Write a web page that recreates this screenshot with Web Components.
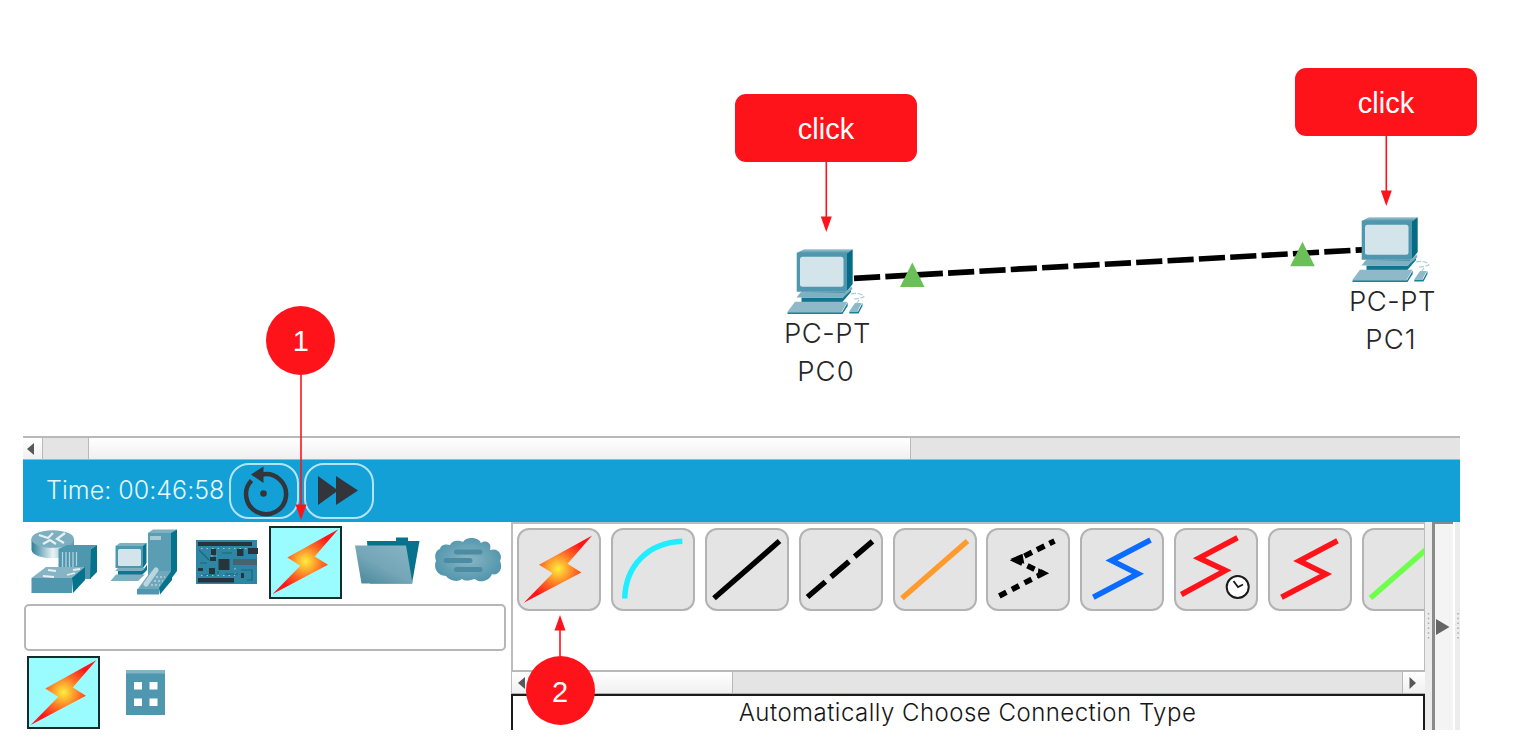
<!DOCTYPE html>
<html lang="en">
<head>
<meta charset="utf-8">
<title>Connection guide</title>
<style>
html,body{margin:0;padding:0;background:#fff}
body{width:1520px;height:746px;overflow:hidden;font-family:Inter,"Liberation Sans",sans-serif;color:#262626}
</style>
</head>
<body>
<guide-page></guide-page>
<script>
const define = (name, markup, setup) => customElements.define(name, class extends HTMLElement {
  constructor() {
    super();
    this.attachShadow({mode: 'open'});
  }
  connectedCallback() {
    if (this.shadowRoot.childNodes.length) return;
    this.shadowRoot.innerHTML = typeof markup === 'function' ? markup(this) : markup;
    if (setup) setup(this);
  }
});

define('bolt-icon', `
<style>:host{display:block}svg{display:block;width:100%;height:100%}</style>
<svg viewBox="0 0 72 72"><defs><radialGradient id="g" gradientUnits="userSpaceOnUse" cx="35.5" cy="35.5" r="31">
<stop offset="0" stop-color="#ffee3c"/><stop offset=".22" stop-color="#ffba32"/><stop offset=".55" stop-color="#ff6a24"/><stop offset="1" stop-color="#ff141a"/></radialGradient></defs>
<path fill="url(#g)" d="M68.3 3.3 44.7 30.5 58 38.8 2.7 68 30.3 39.7 17.3 31.5Z"/></svg>`);

define('pc-node', `
<style>
:host{position:absolute;width:110px;height:145px}
.pc{position:absolute;left:13px;top:0;width:82px;height:70px}
.labels{position:absolute;top:69px;left:0;width:111px;text-align:center;font-size:27.5px;line-height:38px;font-weight:350;letter-spacing:.5px;color:#262626;white-space:nowrap}
.labels div+div{letter-spacing:1.1px;margin-left:-3px}
</style>
<svg class="pc" viewBox="0 0 82 70">
<defs><linearGradient id="t" x1="0" y1="1" x2="0" y2="0"><stop offset="0" stop-color="#3f8ba3"/><stop offset="1" stop-color="#9cc3d0"/></linearGradient></defs>
<path fill="url(#t)" d="M11.7 8 19 4.3H67.7L61.7 9Z"/>
<path fill="#066c86" d="M61.3 9 67.7 4.3V39L61.3 47Z"/>
<path fill="#4f97ae" d="M11.7 7.7H61.5V46.7H11.7Z"/>
<rect x="15" y="11.7" width="43.5" height="30" rx="2.5" fill="#d3e4ea"/>
<path fill="#0f7690" d="M16.5 52.5H58L66 43V47L56.5 58H16.5Z"/>
<path fill="#7fb0c1" d="M11.5 52.5 15.5 47.5H60L66.5 41.5 67.5 44 58 52.5Z"/>
<path fill="#4f97ae" d="M15.5 47.5 17 46.4H61L60 48Z"/>
<path fill="#1a7f98" d="M2.5 67.2 57 67.2 62.7 57.5V61L57.5 69H2.5Z"/>
<path fill="#8fb9c9" d="M2.3 67 10 56.7H62.5L56.5 67Z"/>
<path fill="#1a7f98" d="M64.3 66.5 73 66.5 77.5 58 77.5 61 73.5 68.5H64.3Z"/>
<path fill="#8fb9c9" d="M64.5 66 70 58H76.8L72.5 66Z"/>
<path fill="none" stroke="#a9cbd6" stroke-width="1.2" stroke-dasharray="5 1.5" d="M66 49C72 47.5 78 49 79 52M69 54C73 54 77 53 79 51.8M72 58 74 55"/>
</svg>
<div class="labels"><div><slot></slot></div><div><slot name="name"></slot></div></div>`);

define('click-callout', `
<style>
:host{position:absolute;width:182px;height:140px;font-family:"Liberation Sans",Arial,sans-serif;color:#fff}
.box{box-sizing:border-box;height:68px;border-radius:11px;background:#ff131a;display:flex;align-items:center;justify-content:center;font-size:29px;line-height:34px;padding-top:2px}
svg{display:block;margin:0 auto}
</style>
<div class="box"><slot></slot></div>
<svg width="12" height="70" viewBox="0 0 12 70"><path d="M6.300 0V58" stroke="#ff131a" stroke-width="1.6"/><path d="M.8 54.5H11.8L6.300 70Z" fill="#ff131a"/></svg>`);

define('step-badge', `
<style>
:host{position:absolute;width:69px;display:flex;flex-direction:column;align-items:center;font-family:"Liberation Sans",Arial,sans-serif;color:#fff}
.dot{box-sizing:border-box;width:69px;height:69px;border-radius:50%;background:#ff131a;display:flex;align-items:center;justify-content:center;font-size:29px;line-height:34px;padding-top:1px}
svg{display:block}
:host([up]){flex-direction:column-reverse}
:host([up]) .dot{padding-top:2px}
:host([up]) svg{transform:rotate(180deg)}
</style>
<div class="dot"><slot></slot></div>
<svg width="12"><path class="l" stroke="#ff131a" stroke-width="1.6"/><path class="h" fill="#ff131a"/></svg>`, el => {
  const n = +el.getAttribute('length'), r = el.shadowRoot;
  r.querySelector('svg').setAttribute('height', n);
  r.querySelector('.l').setAttribute('d', `M6 0V${n - 12}`);
  r.querySelector('.h').setAttribute('d', `M.5 ${n - 15.5}H11.5L6 ${n}Z`);
});

define('topology-canvas', `
<style>
:host{display:block;position:relative;height:436px}
.wire{position:absolute;left:0;top:0}
</style>
<svg class="wire" width="1520" height="436">
<path d="M854 278.3 1363 249.8" stroke="#000" stroke-width="5.7" stroke-dasharray="26.2 5.2" fill="none"/>
<path d="M900 287 912.3 262.5 924.5 287ZM1290.2 266.3 1302.5 241.8 1314.8 266.3Z" fill="#6abf56"/>
</svg>
<pc-node style="left:772px;top:245px">PC-PT<span slot="name">PC0</span></pc-node>
<pc-node style="left:1337px;top:213.400px">PC-PT<span slot="name">PC1</span></pc-node>
<click-callout style="left:735px;top:94px">click</click-callout>
<click-callout style="left:1295px;top:68px">click</click-callout>`);

define('scroll-strip', el => `
<style>
:host{display:flex;box-sizing:border-box;height:24px;border-top:2px solid #b9b9b9;border-bottom:1px solid #b0b0b0;background:#e4e4e4}
.a{box-sizing:border-box;flex:none;width:19px;padding-right:3px;display:flex;align-items:center;justify-content:center;background:linear-gradient(#fff,#f0f0f0)}
.pre{flex:none;box-sizing:border-box;width:${el.getAttribute('pre')}px;background:#e4e4e4;border-left:${+el.getAttribute('pre') ? 1 : 0}px solid #b9b9b9}
.thumb{flex:none;box-sizing:border-box;width:${el.getAttribute('thumb')}px;background:linear-gradient(#fff,#f0f0f0);border-right:1px solid #b9b9b9;border-left:${+el.getAttribute('pre') ? 1 : 0}px solid #b9b9b9}
.rest{flex:1}
.end{width:23px;border-left:1px solid #b9b9b9;display:${el.hasAttribute('end') ? 'flex' : 'none'}}
:host([end]) .a:not(.end){padding-right:0}
</style>
<div class="a"><svg width="8" height="12"><path d="M7 0V12L0 6Z" fill="#585858"/></svg></div>
<div class="pre"></div><div class="thumb"></div><div class="rest"></div>
<div class="a end"><svg width="8" height="12"><path d="M.5 0V12L7 6Z" fill="#585858"/></svg></div>`);

define('time-bar', `
<style>
:host{display:flex;align-items:center;box-sizing:border-box;height:62px;background:#12a0d7;color:#e6f6fd;padding-left:23px}
.time{width:183px;font-size:25px;font-weight:350;line-height:30px;white-space:nowrap;letter-spacing:.03px;margin-top:-2px}
.b{box-sizing:border-box;width:70px;height:56px;border:2px solid #b5e3f6;border-radius:20px;margin-right:5px}
svg{display:block;width:66px;height:52px}
</style>
<div class="time">Time: 00:46:58</div>
<div class="b"><svg viewBox="0 0 66 52"><path d="M20.500 15.500A20 20 0 1 0 31 9.600" fill="none" stroke="#32353b" stroke-width="4.500"/><path d="M20 9.500 32.500 1.500V18Z" fill="#32353b"/><circle cx="32.500" cy="28.500" r="3.300" fill="#32353b"/></svg></div>
<div class="b"><svg viewBox="0 0 66 52"><path d="M12 11V40L30 27V40L52 25.500 30 11V24Z" fill="#32353b"/></svg></div>`);

define('device-picker', `
<style>
:host{display:block;width:488px;height:208px;flex:none}
.row{display:flex;height:80px;align-items:center}
.c{width:81px;height:80px;display:flex;align-items:center;justify-content:center;flex:none}
.sel{box-sizing:border-box;width:73px;height:73px;border:2px solid #162b2e;background:#9bfcff}
.sel bolt-icon{width:72px;height:72px;margin:-1.500px}
.in{box-sizing:border-box;margin:2px 0 0 1px;width:482px;height:47px;border:2px solid #b6b6b6;border-radius:5px;background:#fff}
.sub{display:flex;align-items:center;height:73px;margin:5px 0 0 4px;gap:26px}
</style>
<div class="row">
<div class="c"><svg width="81" height="80" viewBox="23 522 81 80">
 <defs><linearGradient id="r"><stop offset="0" stop-color="#2d8099"/><stop offset=".5" stop-color="#e8f2f5"/><stop offset="1" stop-color="#5f9db1"/></linearGradient></defs>
 <path fill="url(#r)" d="M31.500 539V550C33 561 72 561 74 550V539Z"/><ellipse cx="52.700" cy="539" rx="21.300" ry="8.800" fill="#7eafc0"/>
 <path stroke="#e6f0f3" stroke-width="2.200" fill="none" d="M39 535 48 538 53 533M65 533 57 539 64 543M43 544 50 540 56 544"/>
 <path fill="#4f97ae" d="M58.500 549 67 545H97L91 549V579H58.500Z"/><path fill="#06738c" d="M91 549 97 545V572L90 579Z"/>
 <path stroke="#b3d2dc" stroke-width="1.300" d="M62.500 552V567M66 552V567M69.500 552V567M73 552V567M76.500 552V566"/>
 <path fill="#86b4c4" d="M31.500 578 46 567H85L72 578Z"/><path fill="#4f97ae" d="M31.500 578H72V593H31.500Z"/><path fill="#06738c" d="M72 578 85 567V580L73 593Z"/>
 <path stroke="#e6f0f3" stroke-width="1.800" d="M43 576 54 577M48 570 56 571M67 575 75 573M73 570 80 569"/></svg></div>
<div class="c"><svg width="81" height="80" viewBox="104 522 81 80">
 <path fill="#5b9db3" d="M148 533 155 530H177L171 533V577H148Z"/><path fill="#7fb0c1" d="M148 533 153 529.500H177L171 533Z"/><path fill="#06738c" d="M171 533 177 529.500V571L171 579Z"/><path fill="#a8cad5" d="M150 536H161V540H150Z"/>
 <path fill="#7fb0c1" d="M115.500 546 120 543H147L143 547Z"/><path fill="#4f97ae" d="M115.500 546H143V568H115.500Z"/><path fill="#06738c" d="M143 546 146.500 543V563L143 568Z"/><rect x="118" y="549" width="23" height="17" rx="1.500" fill="#d3e4ea"/>
 <path fill="#0f7690" d="M118 570H143L147 565V570L142 575H118Z"/><path fill="#7fb0c1" d="M110.500 581 116 574.500H145L138 581ZM115 571 118 568H145L142 571Z"/>
 <path fill="#6fa8bb" d="M137 590 151 571H171L159 590Z"/><path fill="#4f97ae" d="M137 589H159V594.500H137Z"/><path fill="#06738c" d="M159 588 172 570V580L160 594.500Z"/>
 <path stroke="#b9d5de" stroke-width="5" stroke-linecap="round" d="M146 584 156 570"/><path stroke="#b9d5de" stroke-width="1.400" stroke-dasharray="2 2" d="M154 581H163M156 577H165M151 585H160"/></svg></div>
<div class="c"><svg width="81" height="80" viewBox="185 522 81 80">
 <path fill="#2d86a3" d="M196 540H257V584H196Z"/><path fill="#27343c" d="M198 542H252V546H198ZM198 578H234V582.500H198ZM218.500 559H229.500V570H218.500ZM248 548H258V554H248ZM237 549H243.500V556H237ZM211 549H216V555H211ZM209 568H215V574H209ZM198 568H203V571H198ZM210 557H216V561H210ZM241 573H244V578H241Z"/>
 <path fill="#44646f" d="M233 559H257V565H233Z"/><path fill="none" stroke="#1d657d" stroke-width="1.200" d="M199 550 209 560M200 563H207M203 575H216M222 553H232M241 570H252V580H247M225 574H238M218 574V571"/>
 <path stroke="#a3c7cc" stroke-width="1.200" stroke-dasharray="1.500 4" d="M201 548.500H250M201 575.500H235M211 556H217M235 568V574"/></svg></div>
<div class="c" style="position:relative;left:-1px"><div class="sel"><bolt-icon></bolt-icon></div></div>
<div class="c"><svg width="81" height="80" viewBox="347 522 81 80">
 <defs><linearGradient id="f" x1=".8" y1="0" x2="0" y2="1"><stop offset="0" stop-color="#83b2c2"/><stop offset=".5" stop-color="#74a6b7"/><stop offset="1" stop-color="#468799"/></linearGradient></defs>
 <path fill="#06738c" d="M367 541H396V537.500H408V541H419.500L412 583.500H370Z"/><path fill="url(#f)" d="M355 545.500H406L412.500 583.500H361.500Z"/></svg></div>
<div class="c"><svg width="81" height="80" viewBox="428 522 81 80">
 <defs><radialGradient id="c"><stop offset="0" stop-color="#8bb5c4"/><stop offset="1" stop-color="#5598ae"/></radialGradient></defs>
 <path fill="url(#c)" d="M440 549C441 544 447 544 450 545 453 539 461 541 463 542 466 536 479 537 481 543 487 539 492 544 490 550 499 547 503 556 500 561 504 570 497 576 492 574 489 582 479 583 475 579 470 580 466 582 462 579 457 583 449 580 446 576 437 576 433 567 436 561 434 555 436 550 440 549Z"/>
 <path stroke="#4c8ca3" stroke-width="5" stroke-linecap="round" d="M456.500 552H480M446 560.500H470M456.500 569.500H480"/></svg></div>
</div>
<div class="in"></div>
<div class="sub"><div class="sel"><bolt-icon></bolt-icon></div>
<svg width="39" height="46" viewBox="0 0 39 46"><path fill="#4f97ae" d="M0 0H39V45H0Z"/><path fill="#84b4c5" d="M0 0H39V3.500H0Z"/><path fill="#fff" d="M8 12H16V19.500H8ZM23.500 12H31.500V19.500H23.500ZM8 28.500H16V36H8ZM23.500 28.500H31.500V36H23.500Z"/></svg></div>`);

define('cable-button', `
<style>
:host{display:block;box-sizing:border-box;flex:none;width:84px;height:83px;border:2px solid #b3b3b3;border-radius:12px;background:#e4e4e4;overflow:hidden}
::slotted(svg){display:block;width:84px;height:83px;margin:-2px;fill:none;stroke-width:5.500px}
::slotted(bolt-icon){width:75px;height:75px;margin:2px 0 0 2.400px}
</style><slot></slot>`);

define('cable-panel', `
<style>
:host{display:flex;flex-direction:column;width:914px;height:208px;flex:none;overflow:hidden}
.list{box-sizing:border-box;height:148px;border:solid #bcbcbc;border-width:2px 1px 0 2px;padding:4px 0 0 4px;display:flex;gap:9.900px;overflow:hidden}
.name{box-sizing:border-box;flex:1;border:solid #1b1b1b;border-width:2px 2px 0 2px;text-align:center;font-size:24px;line-height:34px;color:#161616;font-weight:350;letter-spacing:.48px;white-space:nowrap;padding-right:1px}
scroll-strip{border-left:1px solid #bcbcbc}
</style>
<div class="list">
<cable-button><bolt-icon></bolt-icon></cable-button>
<cable-button><svg viewBox="0 0 84 83"><path stroke="#1eeeff" d="M13.700 70.500C14.500 38 37 14.500 71.300 13.300"/></svg></cable-button>
<cable-button><svg viewBox="0 0 84 83"><path stroke="#000" d="M9 70.200 74.500 13"/></svg></cable-button>
<cable-button><svg viewBox="0 0 84 83"><path stroke="#000" stroke-dasharray="23.500 7.500" d="M8.500 69 74 13"/></svg></cable-button>
<cable-button><svg viewBox="0 0 84 83"><path stroke="#ff9a2e" d="M9 70.200 74.500 13"/></svg></cable-button>
<cable-button><svg viewBox="0 0 84 83"><path stroke="#000" stroke-dasharray="8 6.200 8 6.200 8 6.200 10 6 8 5.500 11 5.500 8.500 5.500 8.500 5.500 9 20" d="M13.300 68 57 45.300 30 32.300 68.500 13"/><path fill="#000" d="M24.300 31 36.500 25.700 38.300 35.700ZM61.900 45.200 52.500 40.300 51 50Z"/></svg></cable-button>
<cable-button><svg viewBox="0 0 84 83"><path stroke="#0a6cff" d="M13.300 69.300 58 45.700 31.500 32.500 70.500 12"/></svg></cable-button>
<cable-button><svg viewBox="0 0 84 83"><path stroke="#ff131a" d="M7.300 66.500 51.500 42.500 25 30 63.500 9.700"/><circle cx="63.700" cy="59" r="11" fill="#fff" stroke="#1a1a1a" style="stroke-width:2px"/><path d="M59.500 53 64 59 69 56.500" stroke="#1a1a1a" style="stroke-width:1.800px"/></svg></cable-button>
<cable-button><svg viewBox="0 0 84 83"><path stroke="#ff131a" d="M13.500 69.300 58 46 31.300 33 69.500 12.700"/></svg></cable-button>
<cable-button><svg viewBox="0 0 84 83"><path stroke="#6dff4a" d="M8.500 70 74 13"/></svg></cable-button>
</div>
<scroll-strip pre="0" thumb="202" end></scroll-strip>
<div class="name">Automatically Choose Connection Type</div>`);

define('side-handle', `
<style>
:host{display:flex;width:35px;height:208px}
.split{box-sizing:border-box;width:7px;background:#ececec}
.col{box-sizing:border-box;width:21px;border-left:3px solid #8a8a8a;border-top:2px solid #8a8a8a;background:#f4f4f4;display:flex;align-items:center;padding-left:1px}
.edge{width:5px;margin-left:2px;background:#ececec}
.split,.edge{display:flex;align-items:center;justify-content:center}
</style>
<div class="split"><svg width="3" height="28"><path d="M1.500 1V28" stroke="#aaa" stroke-width="1.500" stroke-dasharray="1.500 3.300"/></svg></div>
<div class="col"><svg width="14" height="16"><path d="M0 0V16L13.500 8Z" fill="#666"/></svg></div>
<div class="edge"><svg width="3" height="28"><path d="M2 1V28" stroke="#aaa" stroke-width="1.500" stroke-dasharray="1.500 3.300"/></svg></div>`);

define('tool-window', `
<style>
:host{display:block;width:1437px;margin-left:23px}
.panels{display:flex}
</style>
<scroll-strip pre="46" thumb="823"></scroll-strip>
<time-bar></time-bar>
<div class="panels"><device-picker></device-picker><cable-panel></cable-panel><side-handle></side-handle></div>`);

define('guide-page', `
<style>:host{display:block;position:relative;width:1520px;height:746px;overflow:hidden}</style>
<topology-canvas></topology-canvas>
<tool-window></tool-window>
<step-badge length="145" style="left:266.400px;top:306px">1</step-badge>
<step-badge up length="41" style="left:525.600px;top:615px">2</step-badge>`);
</script>
</body>
</html>
